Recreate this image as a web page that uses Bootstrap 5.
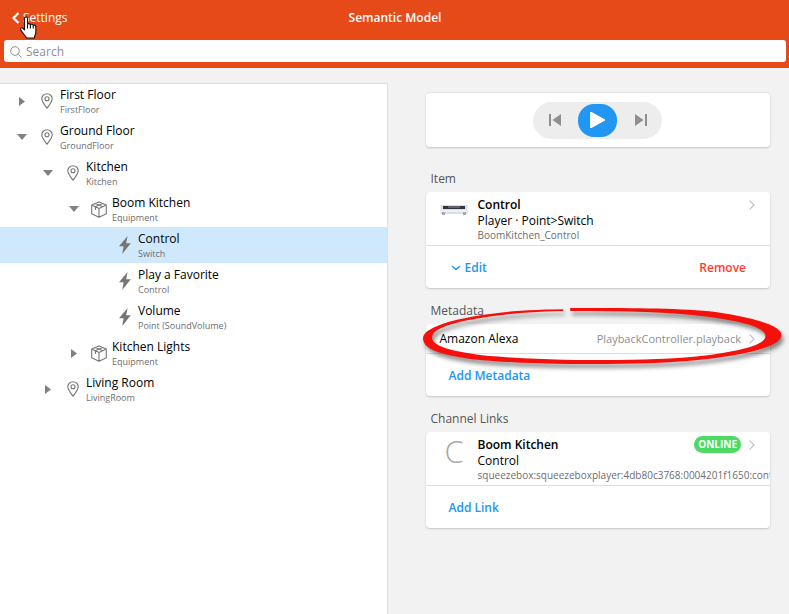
<!DOCTYPE html>
<html lang="en">
<head>
<meta charset="utf-8">
<meta name="viewport" content="width=device-width, initial-scale=1">
<title>Semantic Model</title>
<link href="https://cdn.jsdelivr.net/npm/bootstrap@5.3.0/dist/css/bootstrap.min.css" rel="stylesheet">
<style>
body{font-family:"Open Sans","Noto Sans",sans-serif;font-size:12px;line-height:16px;background:#f2f2f2;color:#000;overflow-x:hidden}
a{text-decoration:none}
.topbar{background:#e64a19;height:68px;padding:0 3px 0 4px}
.topbar-row{display:grid;grid-template-columns:1fr auto 1fr;height:40px;padding:0 8px 4px}
.topbar h1{font-size:12px;line-height:16px;font-weight:600;color:#fff}
.back{color:#fff;font-weight:500;gap:3px;position:relative}
.hand{position:absolute;left:7px;top:6px;z-index:2}
.search{height:22px;background:#fff;border-radius:3px;padding:2px 6px 0;gap:4px}
.search input{border:0;outline:0;background:none;padding:0;line-height:16px;color:#555}
.search input::placeholder{color:#8e8e93;opacity:1}
.pane-tree{width:calc(50% - 7px);flex:none;margin-top:15px;background:#fff;border-right:1px solid #dedede;box-shadow:inset 0 1px #dedede;min-height:calc(100vh - 83px)}
.node{height:36px;color:#000}
.node.picked{background:#d0e8fc}
.sub{font-size:10px;line-height:12px;color:#6d6d72}
.node small{display:block;font-size:9px;line-height:13px;color:#6d6d72}
.node .labels{padding-top:4px}
.lv0{padding-left:14px}.lv1{padding-left:40px}.lv2{padding-left:66px}.lv3{padding-left:92px}
.toggle{width:16px;height:16px;border:0;background:none;padding:0;display:flex;align-items:center;justify-content:center;color:#808080}
.pic{width:20px;margin:0 3px 0 7px;display:flex;justify-content:center}
.detail{padding:25px 19px 0 38px}
.panel{border:0;border-radius:4px;box-shadow:0 1px 2px rgba(0,0,0,.2);overflow:hidden}
.player{height:54px;box-shadow:0 -1px 0 #e0e0e0,0 1px 2px rgba(0,0,0,.2)}
.pill{width:129px;height:37px;border-radius:19px;background:#ededed}
.pill button{border:0;padding:0;background:none;flex:1;height:37px;display:flex;align-items:center;justify-content:center}
.pill .play{flex:none;width:39px;height:33px;margin:0 2px;border-radius:16px;background:#2196f3}
.head{font-size:12px;line-height:18px;font-weight:400;color:#555;padding:14px 5px 4px;margin:0}
.head-item{padding-top:23px}
.entry{height:54px;border-bottom:1px solid #dedede;color:#000;padding:4px 15px 0 14px}
.entry svg{flex:none}
.entry-short{height:30px;padding-top:0}
.thumb{width:38px;flex:none;display:flex}
.main-txt{min-width:0;width:0;white-space:nowrap;padding-top:1px}
.main-txt .ttl{font-weight:600}
.actions{height:42px;padding:2px 24px 0 23px}
.actions button{border:0;background:none;padding:0;font-weight:600;color:#2196f3}
.actions .remove{color:#ff3b30}
.online{background:#4cd964;border-radius:9px;height:17px;line-height:17px;font-size:10px;font-weight:700;color:#fff;padding:0 4px}
.value{color:#8e8e93;font-size:11px}
.avatar{font-size:31px;line-height:30px;font-weight:300;color:#aaa;padding-left:5px}
.ring{position:absolute;left:-6px;top:-18px;width:calc(100% + 20px);height:62px;pointer-events:none;z-index:3;overflow:visible;filter:drop-shadow(2px 4px 2px rgba(0,0,0,.45))}
</style>
</head>
<body>
<svg width="0" height="0" class="d-none">
<symbol id="pin" viewBox="0 0 12 16"><path d="M6 .8C3.100.8.8 3 .8 5.800c0 3.200 2.500 5.700 5.200 9.400 2.700-3.700 5.200-6.200 5.200-9.400C11.200 3 8.900.8 6 .8z" fill="none" stroke="#777" stroke-width="1.100"/><circle cx="6" cy="5.800" r="2" fill="none" stroke="#777" stroke-width="1.100"/></symbol>
<symbol id="box" viewBox="0 0 16 17"><path d="M8 .9 15.300 4v8.700L8 16.300.7 12.700V4zM.7 4 8 7.400 15.300 4M8 7.400v8.900M11.700 2.500 4.400 5.700v3.200M4.400 2.400 11.700 5.700" fill="none" stroke="#777" stroke-width="1.100" stroke-linejoin="round"/></symbol>
<symbol id="bolt" viewBox="0 0 12 18"><path d="M8.600 0 0 10.200h4.600L3.200 18 11.800 7.300H7.100z" fill="#757575"/></symbol>
<symbol id="right" viewBox="0 0 6 9"><path d="M0 0 6 4.500 0 9z" fill="#808080"/></symbol>
<symbol id="down" viewBox="0 0 10 6"><path d="M0 0h10L5 6z" fill="#808080"/></symbol>
<symbol id="chev" viewBox="0 0 6 10"><path d="M.7.7 5 5 .7 9.300" fill="none" stroke="#c0c0c4" stroke-width="1.200"/></symbol>
</svg>
<header class="topbar">
<div class="topbar-row align-items-center">
<a href="#" class="back d-flex align-items-center"><svg width="8" height="12" viewBox="0 0 8 12"><path d="M6.500 1 1.500 6l5 5" fill="none" stroke="#fff" stroke-width="2.200"/></svg>Settings
<svg class="hand" width="19" height="24" viewBox="0 0 19 24"><path d="M5.500 2.500c0-2.200 3-2.200 3 0v6c.3-1.300 2.700-1.200 2.900.4.500-1.100 2.600-.8 2.800.7.800-.9 2.600-.3 2.600 1.300v5.600c0 2.200-1.400 3-1.400 5.500H7.300c0-1.800-3.500-4.300-5.300-7.800-1.200-2.400.8-3.200 2.200-1.700l1.300 1.400z" fill="#fff" stroke="#111" stroke-width="1.100" stroke-linejoin="round"/><path d="M8.500 8.500v4M11.400 9v3.500M14.200 10v2.500" stroke="#111" stroke-width="1.100"/></svg></a>
<h1 class="m-0">Semantic Model</h1>
<span></span>
</div>
<div class="search d-flex align-items-center">
<svg width="12" height="12" viewBox="0 0 12 12"><circle cx="5" cy="5" r="4.300" fill="none" stroke="#8e8e93"/><path d="m8.200 8.200 3.300 3.300" stroke="#8e8e93"/></svg>
<input type="search" class="flex-fill" placeholder="Search" aria-label="Search">
</div>
</header>
<main class="d-flex">
<nav class="pane-tree" aria-label="Model">
<div class="node lv0 d-flex align-items-center"><button class="toggle" aria-label="Expand"><svg width="6" height="9"><use href="#right"/></svg></button><span class="pic"><svg width="12" height="16"><use href="#pin"/></svg></span><div class="labels align-self-start">First Floor<small>FirstFloor</small></div></div>
<div class="node lv0 d-flex align-items-center"><button class="toggle" aria-label="Collapse"><svg width="10" height="6"><use href="#down"/></svg></button><span class="pic"><svg width="12" height="16"><use href="#pin"/></svg></span><div class="labels align-self-start">Ground Floor<small>GroundFloor</small></div></div>
<div class="node lv1 d-flex align-items-center"><button class="toggle" aria-label="Collapse"><svg width="10" height="6"><use href="#down"/></svg></button><span class="pic"><svg width="12" height="16"><use href="#pin"/></svg></span><div class="labels align-self-start">Kitchen<small>Kitchen</small></div></div>
<div class="node lv2 d-flex align-items-center"><button class="toggle" aria-label="Collapse"><svg width="10" height="6"><use href="#down"/></svg></button><span class="pic"><svg width="16" height="17"><use href="#box"/></svg></span><div class="labels align-self-start">Boom Kitchen<small>Equipment</small></div></div>
<div class="node picked lv3 d-flex align-items-center"><span class="toggle"></span><span class="pic"><svg width="12" height="18"><use href="#bolt"/></svg></span><div class="labels align-self-start">Control<small>Switch</small></div></div>
<div class="node lv3 d-flex align-items-center"><span class="toggle"></span><span class="pic"><svg width="12" height="18"><use href="#bolt"/></svg></span><div class="labels align-self-start">Play a Favorite<small>Control</small></div></div>
<div class="node lv3 d-flex align-items-center"><span class="toggle"></span><span class="pic"><svg width="12" height="18"><use href="#bolt"/></svg></span><div class="labels align-self-start">Volume<small>Point (SoundVolume)</small></div></div>
<div class="node lv2 d-flex align-items-center"><button class="toggle" aria-label="Expand"><svg width="6" height="9"><use href="#right"/></svg></button><span class="pic"><svg width="16" height="17"><use href="#box"/></svg></span><div class="labels align-self-start">Kitchen Lights<small>Equipment</small></div></div>
<div class="node lv1 d-flex align-items-center"><button class="toggle" aria-label="Expand"><svg width="6" height="9"><use href="#right"/></svg></button><span class="pic"><svg width="12" height="16"><use href="#pin"/></svg></span><div class="labels align-self-start">Living Room<small>LivingRoom</small></div></div>
</nav>
<section class="detail flex-fill">
<div class="card panel player align-items-center justify-content-center">
<div class="pill d-flex align-items-center">
<button aria-label="Previous"><svg width="12" height="12" viewBox="0 0 12 12"><path d="M0 0h2v12H0zM12 0v12L3.500 6z" fill="#8e8e93"/></svg></button>
<button class="play" aria-label="Play"><svg width="15" height="16" viewBox="0 0 15 16"><path d="M.7 0 15 8 .7 16z" fill="#fff" stroke="#fff" stroke-linejoin="round"/></svg></button>
<button aria-label="Next"><svg width="12" height="12" viewBox="0 0 12 12"><path d="M0 0l8.500 6L0 12zM10 0h2v12h-2z" fill="#8e8e93"/></svg></button>
</div>
</div>
<h2 class="head head-item">Item</h2>
<div class="card panel">
<a href="#" class="entry d-flex">
<span class="thumb pt-2"><svg width="28" height="12" viewBox="0 0 28 12"><path d="M.5 1h27v9H.5z" fill="#d9dde8"/><path d="M3 2h22v3H3z" fill="#30343c"/><path d="M8 2.500h12v1H8z" fill="#8c9098"/><path d="M1 6h26v2H1z" fill="#eef0f5"/><path d="M2 8h3v3H2zM23 8h3v3h-3z" fill="#a5a9b2"/></svg></span>
<span class="main-txt flex-fill"><span class="ttl d-block">Control</span><span class="d-block">Player · Point&gt;Switch</span><span class="sub d-block">BoomKitchen_Control</span></span>
<svg class="mt-1" width="6" height="10"><use href="#chev"/></svg>
</a>
<div class="actions d-flex align-items-center justify-content-between"><button class="d-flex align-items-center gap-1"><svg width="12" height="6" viewBox="0 0 12 6"><path d="m3 1 4 3.500L11 1" fill="none" stroke="#2196f3" stroke-width="1.400"/></svg>Edit</button><button class="remove">Remove</button></div>
</div>
<h2 class="head">Metadata</h2>
<div class="position-relative">
<div class="card panel">
<a href="#" class="entry entry-short d-flex align-items-center"><span class="flex-fill">Amazon Alexa</span><span class="value me-2">PlaybackController.playback</span><svg width="6" height="10"><use href="#chev"/></svg></a>
<div class="actions d-flex align-items-center"><button>Add Metadata</button></div>
</div>
<svg class="ring" viewBox="420 306 364 62" preserveAspectRatio="none" aria-hidden="true"><path fill="#f5100c" d="M563 309.300C530 309.600 505 311.500 482 315C450 320 423 328 423 338.500C423 350 445 356.500 482 360.200C515 363 560 364.200 605 364C650 363.800 690 362 725 356.500C760 351 781 344 781 335C781 325 750 317 715 312C680 307.800 625 308 570 308V311C625 311 670 312 705 316.500C740 321 765 327 765 336C765 345 740 351 705 355.500C675 359 640 360 605 360C560 360 515 358.500 482 355.200C450 351 432 346 432 337.500C432 328 455 322 482 317.700C505 314 530 311.500 563 311z"/></svg>
</div>
<h2 class="head">Channel Links</h2>
<div class="card panel">
<a href="#" class="entry d-flex">
<span class="thumb avatar">C</span>
<span class="main-txt flex-fill"><span class="ttl d-block">Boom Kitchen</span><span class="d-block">Control</span><span class="sub d-block">squeezebox:squeezeboxplayer:4db80c3768:0004201f1650:control</span></span>
<span class="online me-2">ONLINE</span><svg class="mt-1" width="6" height="10"><use href="#chev"/></svg>
</a>
<div class="actions d-flex align-items-center"><button>Add Link</button></div>
</div>
</section>
</main>
<script src="https://cdn.jsdelivr.net/npm/bootstrap@5.3.0/dist/js/bootstrap.bundle.min.js"></script>
</body>
</html>
